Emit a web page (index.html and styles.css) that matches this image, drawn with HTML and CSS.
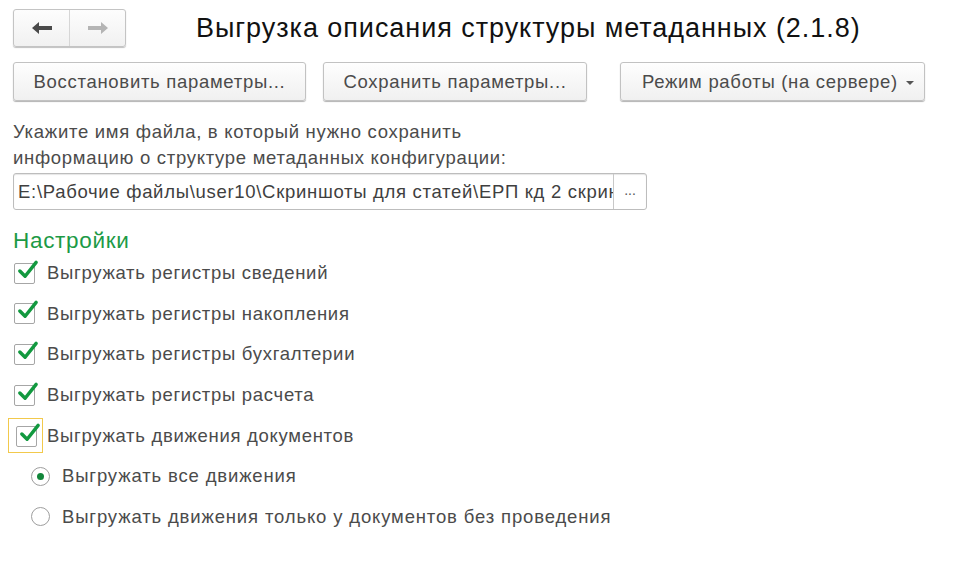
FILE: index.html
```html
<!DOCTYPE html>
<html lang="ru">
<head>
<meta charset="utf-8">
<link rel="stylesheet" href="styles.css">
</head>
<body>
<div class="form">
  <div class="header">
    <div class="nav">
      <button class="nav-btn">
        <svg width="22" height="14" viewBox="0 0 22 14"><path d="M1 7 L8 1 L8 5 L21 5 L21 9 L8 9 L8 13 Z" fill="#4a4a4a"/></svg>
      </button>
      <button class="nav-btn">
        <svg width="22" height="14" viewBox="0 0 22 14"><path d="M21 7 L14 1 L14 5 L1 5 L1 9 L14 9 L14 13 Z" fill="#b4b4b4"/></svg>
      </button>
    </div>
    <h1 class="title">Выгрузка описания структуры метаданных (2.1.8)</h1>
  </div>

  <div class="toolbar">
    <button class="btn btn-restore">Восстановить параметры...</button>
    <button class="btn btn-save">Сохранить параметры...</button>
    <button class="btn btn-mode">Режим работы (на сервере) <span class="caret"></span></button>
  </div>

  <p class="hint">Укажите имя файла, в который нужно сохранить<br>информацию о структуре метаданных конфигурации:</p>

  <div class="file-field">
    <div class="file-input"><span class="file-path">E:\Рабочие файлы\user10\Скриншоты для статей\ЕРП кд 2 скриншоты</span></div>
    <div class="file-select">...</div>
  </div>

  <div class="section-title">Настройки</div>

  <div class="checks">
    <div class="check-row"><span class="cb"><svg class="tick" viewBox="0 0 24 24"><path d="M4 12.5 L9.5 18 L21 3.5" fill="none" stroke="#12993f" stroke-width="3.6" stroke-linecap="round" stroke-linejoin="round"/></svg></span><span>Выгружать регистры сведений</span></div>
    <div class="check-row"><span class="cb"><svg class="tick" viewBox="0 0 24 24"><path d="M4 12.5 L9.5 18 L21 3.5" fill="none" stroke="#12993f" stroke-width="3.6" stroke-linecap="round" stroke-linejoin="round"/></svg></span><span>Выгружать регистры накопления</span></div>
    <div class="check-row"><span class="cb"><svg class="tick" viewBox="0 0 24 24"><path d="M4 12.5 L9.5 18 L21 3.5" fill="none" stroke="#12993f" stroke-width="3.6" stroke-linecap="round" stroke-linejoin="round"/></svg></span><span>Выгружать регистры бухгалтерии</span></div>
    <div class="check-row"><span class="cb"><svg class="tick" viewBox="0 0 24 24"><path d="M4 12.5 L9.5 18 L21 3.5" fill="none" stroke="#12993f" stroke-width="3.6" stroke-linecap="round" stroke-linejoin="round"/></svg></span><span>Выгружать регистры расчета</span></div>
    <div class="check-row"><span class="cb-focus"><span class="cb"><svg class="tick" viewBox="0 0 24 24"><path d="M4 12.5 L9.5 18 L21 3.5" fill="none" stroke="#12993f" stroke-width="3.6" stroke-linecap="round" stroke-linejoin="round"/></svg></span></span><span>Выгружать движения документов</span></div>
    <div class="radio-row"><span class="radio checked"></span><span>Выгружать все движения</span></div>
    <div class="radio-row"><span class="radio"></span><span>Выгружать движения только у документов без проведения</span></div>
  </div>
</div>
</body>
</html>
```

FILE: styles.css
```css
* { box-sizing: border-box; }
html, body { margin: 0; padding: 0; background: #fff; }
body {
  font-family: "Liberation Sans", Arial, sans-serif;
  color: #4b4b4b;
  font-size: 18.5px;
  letter-spacing: 0.7px;
}
.form { padding: 9px 0 0 13px; width: 974px; height: 575px; overflow: hidden; }

.header { display: flex; align-items: center; height: 38px; }
.nav {
  display: flex;
  width: 113px;
  height: 38px;
  border: 1px solid #c4c4c4;
  border-radius: 3px;
  background: linear-gradient(#fdfdfd, #f1f1f1);
  box-shadow: 0 1px 1px rgba(0,0,0,0.25);
  flex: none;
}
.nav-btn {
  flex: 1;
  border: none;
  background: transparent;
  display: flex;
  align-items: center;
  justify-content: center;
  padding: 0;
}
.nav-btn + .nav-btn { border-left: 1px solid #d6d6d6; }
.title {
  margin: 0 0 0 70px;
  font-weight: normal;
  font-size: 27px;
  color: #111;
  letter-spacing: 0.95px;
  white-space: nowrap;
}

.toolbar { display: flex; margin-top: 15px; height: 39px; }
.btn {
  height: 39px;
  border: 1px solid #c2c2c2;
  border-radius: 3px;
  background: linear-gradient(#fefefe, #f0f0f0);
  box-shadow: 0 1px 1px rgba(0,0,0,0.3);
  font-family: "Liberation Sans", Arial, sans-serif;
  font-size: 18.5px;
  letter-spacing: 0.7px;
  color: #4b4b4b;
  padding: 0;
  display: flex;
  align-items: center;
  justify-content: center;
  white-space: nowrap;
  flex: none;
}
.btn-restore { width: 293px; }
.btn-save { width: 264px; margin-left: 17px; }
.btn-mode { width: 305px; margin-left: 33px; justify-content: flex-start; padding-left: 21px; }
.caret {
  display: inline-block;
  width: 0; height: 0;
  border-left: 4px solid transparent;
  border-right: 4px solid transparent;
  border-top: 4px solid #555;
  margin-left: 8px;
  margin-top: 2px;
}

.hint { margin: 18px 0 0 0; line-height: 26px; }

.file-field {
  display: flex;
  width: 634px;
  height: 37px;
  margin-top: 2px;
  border: 1px solid #bdbdbd;
  border-radius: 3px;
  box-shadow: inset 0 1px 1px rgba(0,0,0,0.1);
}
.file-input {
  flex: 1;
  min-width: 0;
  overflow: hidden;
  white-space: nowrap;
  padding: 0 0 0 4px;
  line-height: 35px;
  color: #3f3f3f;
}
.file-select {
  width: 33px;
  border-left: 1px solid #c8c8c8;
  text-align: center;
  line-height: 32px;
  font-size: 14px;
  letter-spacing: 0;
  color: #555;
  flex: none;
}

.section-title {
  margin-top: 18px;
  font-size: 22.5px;
  color: #1c9a46;
  line-height: 26px;
}
.checks { margin-top: -1px; }

.check-row, .radio-row {
  display: flex;
  align-items: center;
  height: 40.6px;
}
.check-row > span:last-child { margin-left: 12px; }
.cb {
  position: relative;
  display: inline-block;
  width: 21px;
  height: 21px;
  margin-left: 1px;
  border: 1px solid #a6a6a6;
  border-radius: 2px;
  background: #fff;
  flex: none;
}
.tick {
  position: absolute;
  left: 1px;
  top: -5px;
  width: 23px;
  height: 23px;
}
.cb-focus {
  display: inline-flex;
  align-items: center;
  justify-content: center;
  width: 35px;
  height: 35px;
  margin-left: -5px;
  margin-right: -8px;
  border: 1.5px solid #f2c94c;
  flex: none;
}
.cb-focus .cb { margin-left: 2px; margin-top: 2px; }
.radio-row { padding-left: 18px; }
.radio-row > span:last-child { margin-left: 12px; letter-spacing: 0.85px; }
.radio {
  width: 19px;
  height: 19px;
  border: 1px solid #9e9e9e;
  border-radius: 50%;
  background: #fff;
  display: inline-flex;
  align-items: center;
  justify-content: center;
  flex: none;
}
.radio.checked::after {
  content: "";
  width: 7px;
  height: 7px;
  border-radius: 50%;
  background: #12863a;
}
```
